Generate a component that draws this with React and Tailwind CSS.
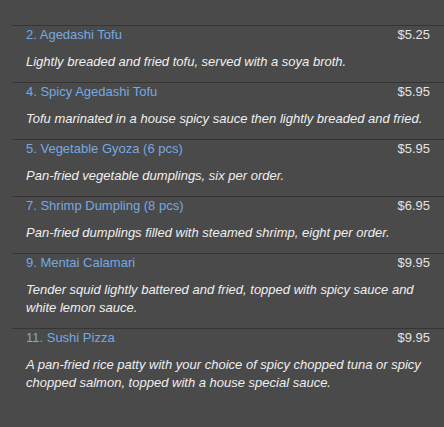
const items = [
  { name: "2. Agedashi Tofu", price: "$5.25", desc: "Lightly breaded and fried tofu, served with a soya broth." },
  { name: "4. Spicy Agedashi Tofu", price: "$5.95", desc: "Tofu marinated in a house spicy sauce then lightly breaded and fried." },
  { name: "5. Vegetable Gyoza (6 pcs)", price: "$5.95", desc: "Pan-fried vegetable dumplings, six per order." },
  { name: "7. Shrimp Dumpling (8 pcs)", price: "$6.95", desc: "Pan-fried dumplings filled with steamed shrimp, eight per order." },
  { name: "9. Mentai Calamari", price: "$9.95", desc: "Tender squid lightly battered and fried, topped with spicy sauce and white lemon sauce." },
  { name: "11. Sushi Pizza", price: "$9.95", desc: "A pan-fried rice patty with your choice of spicy chopped tuna or spicy chopped salmon, topped with a house special sauce." },
];

export default function App() {
  return (
    <div
      className="w-[444px] h-[427px] bg-[#4a4a4a] pt-[25px] pl-3 overflow-hidden"
      style={{ fontFamily: '"Liberation Sans", Arial, sans-serif' }}
    >
      {items.map((it) => (
        <div key={it.name} className="border-t border-[#353535] pl-[14px] pr-[14px]">
          <div className="flex justify-between text-[13px] leading-[17px]">
            <span className="text-[#74a9e3]">{it.name}</span>
            <span className="text-[#e2e2e2]">{it.price}</span>
          </div>
          <p className="mt-[10px] mb-[11px] text-[13px] leading-[18px] italic text-[#efefef] pr-1">
            {it.desc}
          </p>
        </div>
      ))}
    </div>
  );
}
